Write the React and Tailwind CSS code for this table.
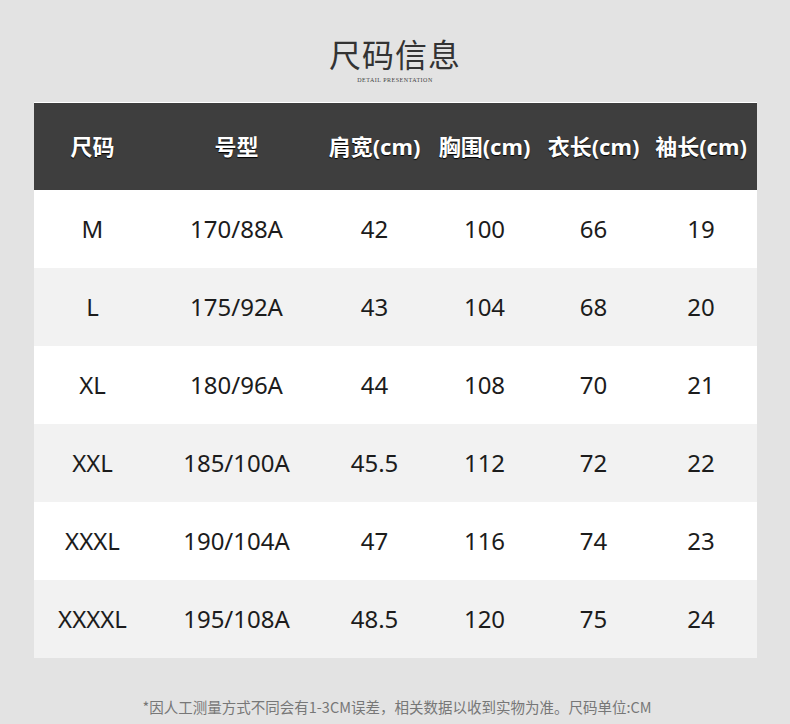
import React from "react";

const cols = [
  { key: "size", label: "尺码", w: "w-[118px]" },
  { key: "type", label: "号型", w: "w-[170px]" },
  { key: "shoulder", label: "肩宽(cm)", w: "w-[106px]" },
  { key: "chest", label: "胸围(cm)", w: "w-[114px]" },
  { key: "length", label: "衣长(cm)", w: "w-[104px]" },
  { key: "sleeve", label: "袖长(cm)", w: "w-[111px]" },
];

const rows = [
  ["M", "170/88A", "42", "100", "66", "19"],
  ["L", "175/92A", "43", "104", "68", "20"],
  ["XL", "180/96A", "44", "108", "70", "21"],
  ["XXL", "185/100A", "45.5", "112", "72", "22"],
  ["XXXL", "190/104A", "47", "116", "74", "23"],
  ["XXXXL", "195/108A", "48.5", "120", "75", "24"],
];

export default function App() {
  return (
    <div className="w-[790px] h-[724px] bg-[#e3e3e3] font-['Noto_Sans','Noto_Sans_CJK_SC',sans-serif] flex flex-col items-center overflow-hidden">
      {/* title */}
      <div className="flex flex-col items-center pt-[37px] h-[102px]">
        <h1 className="text-[32px] leading-[32px] text-[#333] tracking-[1px] font-['Noto_Sans_CJK_SC',sans-serif]">
          尺码信息
        </h1>
        <div className="text-[6px] leading-[8px] mt-[7px] text-[#444] tracking-[0.5px] font-['Liberation_Serif',serif] uppercase">
          Detail Presentation
        </div>
      </div>

      {/* table */}
      <div className="w-[723px] border-t border-white">
        <div className="flex h-[87px] bg-[#3e3e3e] items-center">
          {cols.map((c) => (
            <div
              key={c.key}
              className={`${c.w} text-center text-white text-[22px] font-bold [text-shadow:0_1px_1px_#000] font-['Noto_Sans','Noto_Sans_CJK_SC',sans-serif]`}
            >
              {c.label}
            </div>
          ))}
        </div>
        {rows.map((r, i) => (
          <div
            key={r[0]}
            className={`flex h-[78px] items-center ${i % 2 === 0 ? "bg-white" : "bg-[#f2f2f2]"}`}
          >
            {r.map((v, j) => (
              <div key={j} className={`${cols[j].w} text-center text-[24px] text-[#1c1c1c]`}>
                {v}
              </div>
            ))}
          </div>
        ))}
      </div>

      {/* note */}
      <div className="mt-[38px] text-[14.5px] text-[#777] font-['Noto_Sans_CJK_SC',sans-serif] ml-[4px]">
        *因人工测量方式不同会有1-3CM误差，相关数据以收到实物为准。尺码单位:CM
      </div>
    </div>
  );
}
